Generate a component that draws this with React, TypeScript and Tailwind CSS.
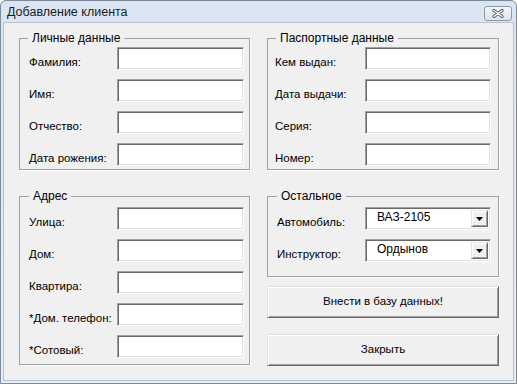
import type { ReactNode } from "react"

const font = { fontFamily: '"Liberation Sans", Arial, sans-serif' }

function TextBox({ width }: { width: string }) {
  return (
    <div
      className={`h-[23px] ${width} bg-white border border-t-[#a0a0a0] border-l-[#a0a0a0] border-b-white border-r-white shadow-[inset_1px_1px_0_#696969,inset_-1px_-1px_0_#e3e3e3]`}
    />
  )
}

function ComboBox({ value }: { value: string }) {
  return (
    <div className="h-[23px] w-[126px] flex items-stretch bg-white border border-t-[#a0a0a0] border-l-[#a0a0a0] border-b-white border-r-white shadow-[inset_1px_1px_0_#696969,inset_-1px_-1px_0_#e3e3e3] p-[2px]">
      <div className="flex-1 pl-[9px] leading-[15px] text-[12px] text-black">{value}</div>
      <div className="w-[17px] flex items-center justify-center bg-[#f0f0f0] border border-[#e3e3e3] border-r-[#696969] border-b-[#696969] shadow-[inset_1px_1px_0_#fff,inset_-1px_-1px_0_#a0a0a0]">
        <svg width="7" height="4" viewBox="0 0 7 4">
          <path d="M0 0h7L3.5 4z" fill="#000" />
        </svg>
      </div>
    </div>
  )
}

function Group({
  title,
  className,
  legendClass,
  children,
}: {
  title: string
  className: string
  legendClass: string
  children: ReactNode
}) {
  return (
    <fieldset
      className={`border border-[#a0a0a0] shadow-[1px_1px_0_#fff] ${className}`}
    >
      <legend className={`px-[4px] text-[12px] leading-[14px] text-black ${legendClass}`}>
        {title}
      </legend>
      {children}
    </fieldset>
  )
}

function Row({
  label,
  labelWidth,
  children,
}: {
  label: string
  labelWidth: string
  children: ReactNode
}) {
  return (
    <div className="flex items-center h-[23px]">
      <div className={`${labelWidth} pt-[7px] text-[11.5px] leading-[14px] text-black whitespace-nowrap`}>
        {label}
      </div>
      {children}
    </div>
  )
}

function Button({ text, className }: { text: string; className?: string }) {
  return (
    <button
      className={`h-[32px] w-[232px] bg-[#f0f0f0] border border-[#e3e3e3] border-r-[#696969] border-b-[#696969] shadow-[inset_1px_1px_0_#fff,inset_-1px_-1px_0_#a0a0a0] text-[11.5px] text-black ${className ?? ""}`}
    >
      {text}
    </button>
  )
}

export default function App() {
  return (
    <div
      className="w-[517px] h-[384px] flex flex-col border border-[#7d8a9b] rounded-t-[6px] bg-gradient-to-b from-[#dbe5f1] to-[#e6edf5] overflow-hidden"
      style={font}
    >
      {/* title bar */}
      <div className="h-[21px] flex items-center justify-between pl-[6px] pr-[4px]">
        <span className="text-[12.5px] text-[#1b1b1b] pt-[2px]">Добавление клиента</span>
        <div className="mt-[4px] w-[28px] h-[15px] rounded-[3px] border border-[#8d99a8] bg-gradient-to-b from-[#f4f7fa] to-[#dde4ec] flex items-center justify-center">
          <svg width="12" height="9" viewBox="0 0 12 9">
            <path d="M2 1.5l8 6M10 1.5l-8 6" stroke="#4f5a68" strokeWidth="3.2" strokeLinecap="round" />
            <path d="M2 1.5l8 6M10 1.5l-8 6" stroke="#fff" strokeWidth="1.4" strokeLinecap="round" />
          </svg>
        </div>
      </div>

      {/* client area */}
      <div className="flex-1 mx-[2px] mb-[2px] border border-[#b6c2cf] bg-[#f0f0f0] flex gap-[17px] pl-[15px] pt-[8px]">
        {/* left column */}
        <div className="w-[231px] flex flex-col gap-[19px]">
          <Group title="Личные данные" legendClass="-ml-[1px]" className="pl-[9px] pt-[2px] pb-[3px] flex flex-col gap-[9px]">
            <Row label="Фамилия:" labelWidth="w-[88px]"><TextBox width="w-[127px]" /></Row>
            <Row label="Имя:" labelWidth="w-[88px]"><TextBox width="w-[127px]" /></Row>
            <Row label="Отчество:" labelWidth="w-[88px]"><TextBox width="w-[127px]" /></Row>
            <Row label="Дата рожения:" labelWidth="w-[88px]"><TextBox width="w-[127px]" /></Row>
          </Group>
          <Group title="Адрес" legendClass="ml-0" className="pl-[9px] pt-[4px] pb-[6px] flex flex-col gap-[9px]">
            <Row label="Улица:" labelWidth="w-[88px]"><TextBox width="w-[127px]" /></Row>
            <Row label="Дом:" labelWidth="w-[88px]"><TextBox width="w-[127px]" /></Row>
            <Row label="Квартира:" labelWidth="w-[88px]"><TextBox width="w-[127px]" /></Row>
            <Row label="*Дом. телефон:" labelWidth="w-[88px]"><TextBox width="w-[127px]" /></Row>
            <Row label="*Сотовый:" labelWidth="w-[88px]"><TextBox width="w-[127px]" /></Row>
          </Group>
        </div>

        {/* right column */}
        <div className="w-[232px] flex flex-col">
          <Group title="Паспортные данные" legendClass="ml-[1px]" className="pl-[7px] pt-[2px] pb-[3px] flex flex-col gap-[9px]">
            <Row label="Кем выдан:" labelWidth="w-[90px]"><TextBox width="w-[126px]" /></Row>
            <Row label="Дата выдачи:" labelWidth="w-[90px]"><TextBox width="w-[126px]" /></Row>
            <Row label="Серия:" labelWidth="w-[90px]"><TextBox width="w-[126px]" /></Row>
            <Row label="Номер:" labelWidth="w-[90px]"><TextBox width="w-[126px]" /></Row>
          </Group>
          <Group title="Остальное" legendClass="ml-0" className="mt-[19px] pl-[9px] pt-[4px] pb-[14px] flex flex-col gap-[9px]">
            <Row label="Автомобиль:" labelWidth="w-[88px]"><ComboBox value="ВАЗ-2105" /></Row>
            <Row label="Инструктор:" labelWidth="w-[88px]"><ComboBox value="Ордынов" /></Row>
          </Group>
          <Button text="Внести в базу данных!" className="mt-[9px]" />
          <Button text="Закрыть" className="mt-[16px]" />
        </div>
      </div>
    </div>
  )
}
